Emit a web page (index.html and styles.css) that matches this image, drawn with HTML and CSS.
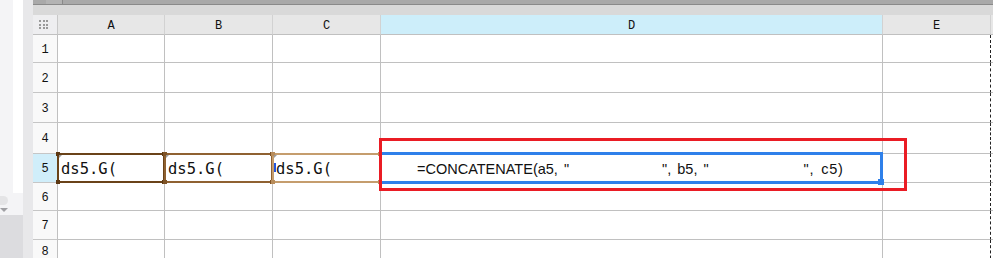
FILE: index.html
```html
<!DOCTYPE html>
<html>
<head>
<meta charset="utf-8">
<link rel="stylesheet" href="styles.css">
</head>
<body>
<div class="app">
  <aside class="side">
    <div class="side-main">
      <div class="side-top"><div class="side-light"></div><div class="side-white"></div></div>
      <div class="side-scroll"><div class="pill"></div><div class="tri"></div></div>
      <div class="side-bottom"></div>
    </div>
    <div class="side-rail"></div>
  </aside>
  <main class="sheet">
    <div class="topbar"><div class="topbar-box"></div></div>
    <div class="band"></div>
    <div class="grid-wrap">
      <div class="grid">
        <div class="corner"><div class="dots"><i></i><i></i><i></i><i></i><i></i><i></i><i></i><i></i><i></i></div></div>
        <div class="ch">A</div><div class="ch">B</div><div class="ch">C</div><div class="ch ch-sel">D</div><div class="ch">E</div><div class="ch ch-end"></div>

        <div class="rh">1</div><div class="c"></div><div class="c"></div><div class="c"></div><div class="c"></div><div class="c e"></div><div class="c x"></div>
        <div class="rh">2</div><div class="c"></div><div class="c"></div><div class="c"></div><div class="c"></div><div class="c e"></div><div class="c x"></div>
        <div class="rh">3</div><div class="c"></div><div class="c"></div><div class="c"></div><div class="c"></div><div class="c e"></div><div class="c x"></div>
        <div class="rh">4</div><div class="c"></div><div class="c"></div><div class="c"></div><div class="c"></div><div class="c e"></div><div class="c x"></div>
        <div class="rh rh-sel">5</div>
        <div class="c val">ds5.G(</div>
        <div class="c val">ds5.G(</div>
        <div class="c val">ds5.G(</div>
        <div class="c formula"><span>=CONCATENATE(a5, "</span><span class="gap g1"></span><span>", b5, "</span><span class="gap g2"></span><span class="last">", c5)</span></div>
        <div class="c e"></div><div class="c x"></div>
        <div class="rh">6</div><div class="c"></div><div class="c"></div><div class="c"></div><div class="c"></div><div class="c e"></div><div class="c x"></div>
        <div class="rh">7</div><div class="c"></div><div class="c"></div><div class="c"></div><div class="c"></div><div class="c e"></div><div class="c x"></div>
        <div class="rh rh-last">8</div><div class="c"></div><div class="c"></div><div class="c"></div><div class="c"></div><div class="c e"></div><div class="c x"></div>
      </div>

      <div class="ref ref-a"><b class="k tl"></b><b class="k tr"></b><b class="k bl"></b><b class="k br"></b><s class="mark"></s></div>
      <div class="ref ref-b"><b class="k tl"></b><b class="k tr"></b><b class="k bl"></b><b class="k br"></b><s class="mark"></s></div>
      <div class="ref ref-c"><b class="k tl"></b><b class="k tr"></b><b class="k bl"></b><b class="k br"></b><s class="mark"></s><span class="arrow"></span></div>
      <div class="sel"><div class="handle"></div></div>
      <div class="annot"></div>
    </div>
  </main>
</div>
</body>
</html>
```
FILE: styles.css
```css
* { box-sizing: border-box; }
html, body { margin: 0; padding: 0; background: #fff; }
body { width: 993px; height: 258px; overflow: hidden; }

.app { display: flex; height: 258px; }

.side { width: 33px; display: flex; flex: none; }
.side-main { width: 23px; display: flex; flex-direction: column; }
.side-top { height: 193px; display: flex; flex: none; }
.side-light { width: 13px; background: #f4f4f6; }
.side-white { width: 10px; background: #fff; }
.side-scroll { height: 22px; flex: none; background: #f4f4f6; position: relative; }
.pill { position: absolute; left: -4px; top: 3px; width: 12px; height: 9px; border-radius: 5px; background: #e4e4e6; }
.tri { position: absolute; left: 0; top: 15px; width: 0; height: 0; border-left: 4px solid transparent; border-right: 4px solid transparent; border-top: 4px solid #a0a0a4; }
.side-bottom { flex: 1; background: #dcdcdf; }
.side-rail { width: 10px; background: #e8e8ea; }

.sheet { flex: 1; display: flex; flex-direction: column; min-width: 0; }
.topbar { height: 5px; flex: none; background: #a9a9a9; border-bottom: 1px solid #8a8a8a; position: relative; }
.topbar-box { position: absolute; left: 13px; top: 0; width: 17px; height: 4px; background: #b3b3b3; border-right: 1px solid #8a8a8a; }
.band { height: 10px; flex: none; background: #d9d9d9; }

.grid-wrap { position: relative; flex: 1; min-height: 0; overflow: hidden; }
.grid {
  display: grid;
  grid-template-columns: 25px 107px 108px 108px 502px 108px 1fr;
  grid-template-rows: 20px 28px 30px 30px 31px 29px 28px 29px 29px;
}
.corner { background: #eeeef0; border-right: 1px solid #c8c8c8; border-bottom: 1px solid #c0c0c0; display: flex; align-items: center; justify-content: center; padding-right: 3px; }
.dots { display: grid; grid-template-columns: repeat(3, 2px); gap: 1.5px; }
.dots i { width: 2px; height: 2px; background: #9a9a9a; display: block; }

.ch {
  background: #e7e7e7;
  border-right: 1px solid #d2d2d2;
  border-bottom: 1px solid #c0c0c0;
  display: flex; align-items: center; justify-content: center;
  font-family: "Liberation Mono", "DejaVu Sans Mono", monospace;
  font-size: 12px; color: #111; padding-top: 2px;
}
.ch-sel { background: #cdeefa; }
.ch-end { border-right: none; }

.rh {
  background: #f9f9f9;
  border-right: 1px solid #c0c0c0;
  border-bottom: 1px solid #c6c6c6;
  display: flex; align-items: center; justify-content: center;
  font-family: "Liberation Mono", "DejaVu Sans Mono", monospace;
  font-size: 12px; color: #111; padding-top: 2px;
}
.rh-sel { background: #d0eefa; }
.rh-last { align-items: flex-start; padding-top: 5px; }

.c { border-right: 1px solid #c0c0c0; border-bottom: 1px solid #c0c0c0; background: #fff; }
.c.e { border-right: 1px dashed #222; }
.c.x { border-right: none; }

.val {
  font-family: "DejaVu Sans Mono", "Liberation Mono", monospace;
  font-size: 15.5px; color: #111;
  display: flex; align-items: center; padding-left: 3px; padding-top: 1px;
}
.formula {
  font-family: "Liberation Sans", Arial, sans-serif;
  font-size: 14.5px; color: #111;
  display: flex; align-items: center; padding-left: 36px; padding-top: 2px;
  white-space: pre; word-spacing: 2px;
}
.formula .gap { flex: none; }
.formula .g1 { width: 93px; }
.formula .g2 { width: 95px; }
.formula .last { letter-spacing: 0.8px; }

.ref { position: absolute; top: 138px; height: 30px; border: 2px solid; }
.ref-a { left: 24px; width: 108px; border-color: #6a4319; }
.ref-b { left: 131px; width: 109px; border-color: #8f6131; }
.ref-c { left: 239px; width: 109px; border-color: #c59d6d; }
.k { position: absolute; width: 4px; height: 4px; }
.ref-a .k { background: #5c3812; }
.ref-b .k { background: #7e5326; }
.ref-c .k { background: #b88c5a; }
.tl { left: -3px; top: -3px; }
.tr { right: -3px; top: -3px; }
.bl { left: -3px; bottom: -3px; }
.br { right: -3px; bottom: -3px; }
.mark { position: absolute; left: 0; top: 0; width: 0; height: 0; border-top: 3px solid #9a9a9a; border-right: 3px solid transparent; }
.arrow { position: absolute; left: 0px; top: 8px; width: 2px; height: 9px; background: #2255dd; }

.sel { position: absolute; left: 347px; top: 137px; width: 503px; height: 32px; border: 3px solid #2f80ea; border-left: none; }
.handle { position: absolute; right: -4px; bottom: -4px; width: 6px; height: 6px; background: #2f80ea; }

.annot { position: absolute; left: 346px; top: 123px; width: 528px; height: 53px; border: 3px solid #ea1c24; }
```
